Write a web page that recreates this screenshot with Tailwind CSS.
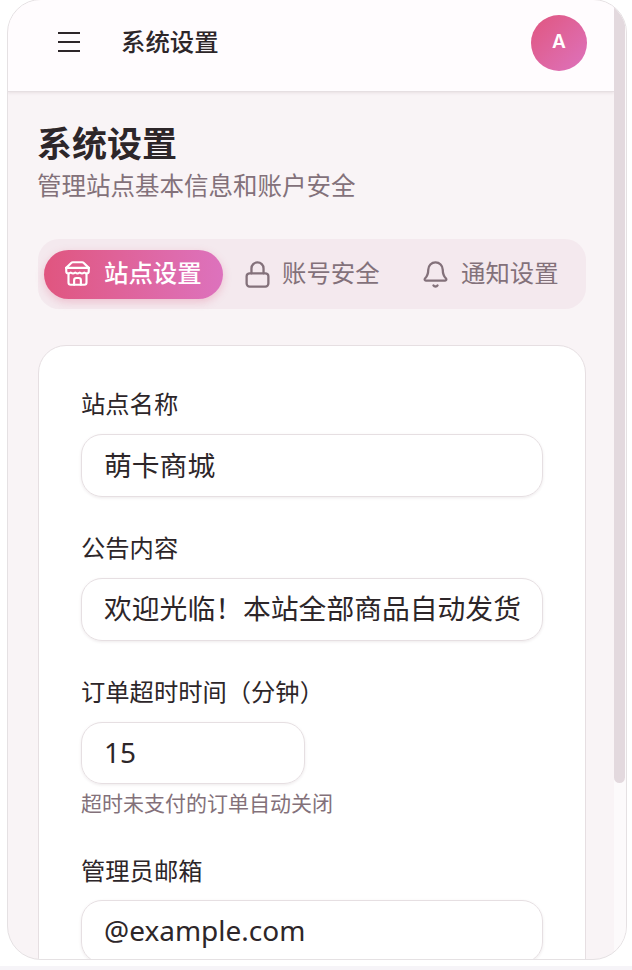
<!DOCTYPE html>
<html lang="zh"><head><meta charset="utf-8"><script src="https://cdn.jsdelivr.net/npm/@tailwindcss/browser@4"></script></head>
<body class="bg-white overflow-hidden font-['Noto_Sans','Noto_Sans_CJK_SC',sans-serif]">
<div class="h-[970px] w-[632px] overflow-hidden bg-white">
<div class="ml-[7px] h-[961px] w-[620px] -mt-px rounded-[34px] border border-[#e5e1e3] overflow-hidden flex bg-[#f9f4f6]">
 <main class="w-[606px] shrink-0 flex flex-col">
  <header class="h-[92px] shrink-0 bg-[#fffcfe] border-b border-[#e6dfe2] shadow-[0_1px_3px_rgba(80,50,60,0.10)] flex items-center pl-[50px] pr-[27px]">
   <svg class="w-[22px] h-[20px] text-[#2d2629] -mt-[8px]" viewBox="0 0 22 20" fill="none" stroke="currentColor" stroke-width="2"><path d="M0 1h22M0 10h22M0 19h22"/></svg>
   <h2 class="ml-[41px] text-[24.4px] leading-[28px] font-medium text-[#2d2629] -mt-[10px] font-['Noto_Sans_CJK_SC',sans-serif]">系统设置</h2>
   <div class="ml-auto w-[56px] h-[56px] rounded-full bg-gradient-to-br from-[#e0557f] to-[#dd72bd] text-white flex items-center justify-center text-[19px] font-semibold -mt-[6px] font-['Inter',sans-serif]">A</div>
  </header>
  <div class="flex-1 pl-[30px] pr-[28px] pt-[30px] overflow-hidden">
   <h1 class="-ml-px text-[35px] leading-[40px] font-bold text-[#2d2629] font-['Noto_Sans_CJK_SC',sans-serif]">系统设置</h1>
   <p class="-ml-px text-[24.5px] leading-[30px] text-[#83717a] mt-[8px] font-['Noto_Sans_CJK_SC',sans-serif]">管理站点基本信息和账户安全</p>
   <nav class="mt-[39px] h-[70px] rounded-[21px] bg-[#f4e9ee] flex items-center pl-[6px]">
    <div class="w-[179px] h-[49px] rounded-full bg-gradient-to-r from-[#e0557f] to-[#dd72bd] shadow-[0_3px_8px_rgba(224,85,127,0.28)] text-white flex items-center pl-[20px] gap-[13px]">
     <svg class="w-[27px] h-[27px] mb-px" viewBox="0 0 24 24" fill="none" stroke="currentColor" stroke-width="1.9" stroke-linecap="round" stroke-linejoin="round"><path d="m2 7 4.410-4.410A2 2 0 0 1 7.830 2h8.340a2 2 0 0 1 1.420.590L22 7"/><path d="M4 12v8a2 2 0 0 0 2 2h12a2 2 0 0 0 2-2v-8"/><path d="M15 22v-4a2 2 0 0 0-2-2h-2a2 2 0 0 0-2 2v4"/><path d="M2 7h20"/><path d="M22 7v3a2 2 0 0 1-2 2a2.700 2.700 0 0 1-1.590-.630.700.700 0 0 0-.820 0A2.700 2.700 0 0 1 16 12a2.700 2.700 0 0 1-1.590-.630.700.700 0 0 0-.820 0A2.700 2.700 0 0 1 12 12a2.700 2.700 0 0 1-1.590-.630.700.700 0 0 0-.820 0A2.700 2.700 0 0 1 8 12a2.700 2.700 0 0 1-1.590-.630.700.700 0 0 0-.820 0A2.700 2.700 0 0 1 4 12a2 2 0 0 1-2-2V7"/></svg>
     <span class="mb-[4px] text-[24.4px] leading-[32px] font-medium font-['Noto_Sans_CJK_SC',sans-serif]">站点设置</span>
    </div>
    <div class="ml-[1px] w-[178px] h-[49px] text-[#83717a] flex items-center pl-[19px] gap-[10px]">
     <svg class="w-[29px] h-[29px]" viewBox="0 0 24 24" fill="none" stroke="currentColor" stroke-width="1.9" stroke-linecap="round" stroke-linejoin="round"><rect x="3" y="11" width="18" height="11" rx="2.500"/><path d="M7 11V7a5 5 0 0 1 10 0v4"/></svg>
     <span class="mb-[4px] text-[24.4px] leading-[32px] font-['Noto_Sans_CJK_SC',sans-serif]">账号安全</span>
    </div>
    <div class="w-[170px] h-[49px] text-[#83717a] flex items-center pl-[19px] gap-[11px]">
     <svg class="w-[29px] h-[29px]" viewBox="0 0 24 24" fill="none" stroke="currentColor" stroke-width="1.9" stroke-linecap="round" stroke-linejoin="round"><path d="M10.300 21a2 2 0 0 0 3.400 0"/><path d="M3.300 15.300A1 1 0 0 0 4 17h16a1 1 0 0 0 .7-1.700C19.400 14 18 12.500 18 8A6 6 0 0 0 6 8c0 4.500-1.400 6-2.700 7.300"/></svg>
     <span class="mb-[4px] text-[24.4px] leading-[32px] font-['Noto_Sans_CJK_SC',sans-serif]">通知设置</span>
    </div>
   </nav>
   <section class="mt-[36px] rounded-t-[28px] border border-[#e6dfe2] bg-white px-[42px] pt-[37px] h-[700px]">
    <label class="block text-[24.3px] leading-[40px] text-[#2d2629] font-['Noto_Sans_CJK_SC',sans-serif]">站点名称</label>
    <div class="mt-[11px] h-[63px] rounded-[21px] border border-[#e6dfe2] shadow-[0_1px_3px_rgba(80,50,60,0.10)] flex items-center px-[22px] pb-[2px] text-[27.8px] text-[#2d2629] font-['Noto_Sans_CJK_SC',sans-serif]">萌卡商城</div>
    <label class="block mt-[30px] text-[24.3px] leading-[40px] text-[#2d2629] font-['Noto_Sans_CJK_SC',sans-serif]">公告内容</label>
    <div class="mt-[11px] h-[63px] rounded-[21px] border border-[#e6dfe2] shadow-[0_1px_3px_rgba(80,50,60,0.10)] flex items-center px-[22px] pb-[3px] text-[27.8px] text-[#2d2629] whitespace-nowrap overflow-hidden font-['Noto_Sans_CJK_SC',sans-serif]">欢迎光临！本站全部商品自动发货</div>
    <label class="block mt-[30px] text-[24.3px] leading-[40px] text-[#2d2629] font-['Noto_Sans_CJK_SC',sans-serif]">订单超时时间（分钟）</label>
    <div class="mt-[11px] w-[224px] h-[62px] rounded-[21px] border border-[#e6dfe2] shadow-[0_1px_3px_rgba(80,50,60,0.10)] flex items-center px-[22px] pb-[3px] text-[28px] text-[#2d2629]">15</div>
    <p class="mt-[4px] text-[21px] leading-[28px] text-[#83717a] font-['Noto_Sans_CJK_SC',sans-serif]">超时未支付的订单自动关闭</p>
    <label class="block mt-[34px] text-[24.3px] leading-[40px] text-[#2d2629] font-['Noto_Sans_CJK_SC',sans-serif]">管理员邮箱</label>
    <div class="mt-[10px] h-[63px] rounded-[21px] border border-[#e6dfe2] shadow-[0_1px_3px_rgba(80,50,60,0.10)] flex items-center px-[22px] pb-[3px] text-[28px] text-[#2d2629]">@example.com</div>
   </section>
  </div>
 </main>
 <div class="w-[12px] shrink-0 bg-[#fcfafb]"><div class="h-[783px] w-[11px] rounded-b-[6px] bg-[#e3d9de]"></div></div>
</div>
<div class="mt-[6px] h-[4px] bg-[#f6f4f8]"></div>
</div>
</body></html>
